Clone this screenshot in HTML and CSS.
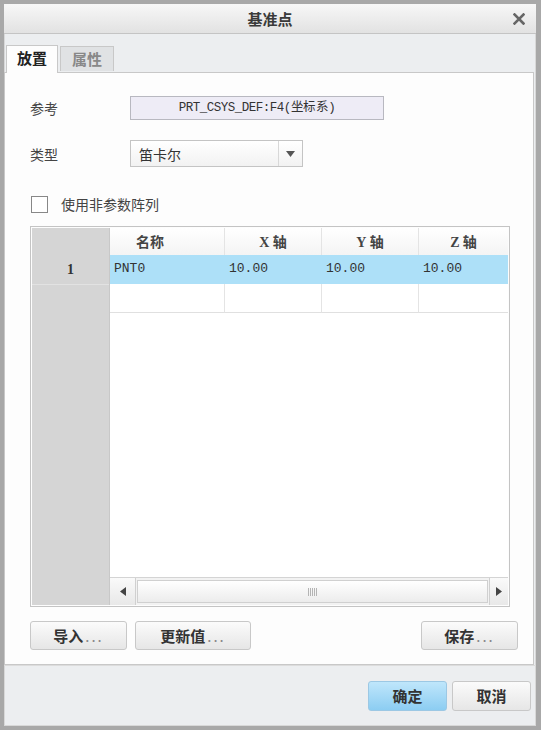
FILE: index.html
```html
<!DOCTYPE html>
<html lang="zh-CN">
<head>
    <meta charset="UTF-8">
    <meta name="viewport" content="width=device-width, initial-scale=1.0">
    <title>基准点</title>
    <link rel="stylesheet" href="styles.css">
</head>
<body>
    <div class="dialog">
        <div class="titlebar">
            <span class="title">基准点</span>
            <span class="close"><svg width="12" height="12" viewBox="0 0 12 12"><path d="M1.5 1.5L10.5 10.5M10.5 1.5L1.5 10.5" stroke="#666" stroke-width="2.6" stroke-linecap="square"/></svg></span>
        </div>
        <div class="tabs">
            <div class="tab active">放置</div>
            <div class="tab">属性</div>
        </div>
        <div class="panel">
            <div class="form">
                <div class="label">参考</div>
                <div class="ref-field">PRT_CSYS_DEF:F4(坐标系)</div>
                <div class="label">类型</div>
                <div class="select">
                    <span class="select-text">笛卡尔</span>
                    <span class="select-arrow"><svg width="9" height="6" viewBox="0 0 9 6"><path d="M0 0H9L4.5 6Z" fill="#555"/></svg></span>
                </div>
            </div>
            <label class="check-row">
                <span class="checkbox"></span>
                <span>使用非参数阵列</span>
            </label>
            <div class="grid">
                <div class="row-heads">
                    <div class="rh-top"></div>
                    <div class="rh-cell">1</div>
                </div>
                <div class="grid-main">
                    <div class="grid-row head">
                        <div class="cell c1">名称</div>
                        <div class="cell c2"><span class="axis">X</span> 轴</div>
                        <div class="cell c3"><span class="axis">Y</span> 轴</div>
                        <div class="cell c4"><span class="axis">Z</span> 轴</div>
                    </div>
                    <div class="grid-row selected">
                        <div class="cell c1">PNT0</div>
                        <div class="cell c2">10.00</div>
                        <div class="cell c3">10.00</div>
                        <div class="cell c4">10.00</div>
                    </div>
                    <div class="grid-row empty">
                        <div class="cell c1"></div>
                        <div class="cell c2"></div>
                        <div class="cell c3"></div>
                        <div class="cell c4"></div>
                    </div>
                    <div class="grid-fill"></div>
                    <div class="hscroll">
                        <div class="sb-btn left"><svg width="6" height="9" viewBox="0 0 6 9"><path d="M6 0V9L0 4.5Z" fill="#444"/></svg></div>
                        <div class="sb-track"><span class="grip"></span></div>
                        <div class="sb-btn right"><svg width="6" height="9" viewBox="0 0 6 9"><path d="M0 0V9L6 4.5Z" fill="#444"/></svg></div>
                    </div>
                </div>
            </div>
            <div class="actions">
                <button class="btn w97">导入<span class="dots">...</span></button>
                <button class="btn w116">更新值<span class="dots">...</span></button>
                <span class="spacer"></span>
                <button class="btn w97">保存<span class="dots">...</span></button>
            </div>
        </div>
        <div class="footer">
            <button class="btn primary">确定</button>
            <button class="btn">取消</button>
        </div>
    </div>
</body>
</html>
```

FILE: styles.css
```css
body {
    margin: 0;
    background: #9a9a9a;
    font-family: "Noto Sans CJK SC", "Noto Sans", sans-serif;
    font-size: 14px;
    color: #333;
}
.dialog {
    width: 541px;
    height: 730px;
    box-sizing: border-box;
    border: 4px solid #a8a8a8;
    border-right-width: 5px;
    background: #eceef0;
    display: flex;
    flex-direction: column;
    box-shadow: inset 0 0 0 1px #d8d8d8;
}
.titlebar {
    height: 29px;
    flex: none;
    display: flex;
    align-items: center;
    justify-content: center;
    position: relative;
    background: linear-gradient(#f7f7f7, #e2e2e2);
    border-bottom: 1px solid #c4c4c4;
}
.title {
    font-weight: bold;
    font-size: 15px;
    color: #3a3a3a;
}
.close {
    position: absolute;
    right: 11px;
    top: 9px;
    display: flex;
}
.tabs {
    height: 38px;
    flex: none;
    display: flex;
    align-items: flex-end;
    padding-left: 2px;
    gap: 2px;
}
.tab {
    height: 25px;
    width: 54px;
    box-sizing: border-box;
    border: 1px solid #c8c8c8;
    border-bottom: none;
    background: #e0e2e4;
    color: #888;
    font-weight: bold;
    font-size: 15px;
    line-height: 24px;
    text-align: center;
    margin-bottom: 1px;
}
.tab.active {
    height: 28px;
    width: 52px;
    background: #fdfdfd;
    color: #222;
    margin-bottom: -1px;
    position: relative;
    z-index: 1;
}
.panel {
    flex: 1;
    background: #fdfdfd;
    border: 1px solid #c8c8c8;
    margin-right: 2px;
    padding: 23px 0 13px 25px;
    display: flex;
    flex-direction: column;
}
.form {
    display: grid;
    grid-template-columns: 100px 254px;
    row-gap: 20px;
    align-items: center;
}
.label {
    color: #444;
    font-size: 14px;
}
.ref-field {
    height: 24px;
    box-sizing: border-box;
    border: 1px solid #b8b8c0;
    background: #eeecf6;
    font-family: "Liberation Mono", monospace;
    font-size: 12.5px;
    letter-spacing: -0.5px;
    text-align: center;
    line-height: 22px;
    color: #333;
}
.select {
    width: 173px;
    height: 27px;
    box-sizing: border-box;
    border: 1px solid #c4c4c4;
    background: linear-gradient(#ffffff, #f2f2f2);
    display: flex;
    align-items: center;
}
.select-text {
    flex: 1;
    padding-left: 8px;
    font-size: 14px;
    color: #333;
}
.select-arrow {
    width: 23px;
    height: 100%;
    border-left: 1px solid #d8d8d8;
    display: flex;
    align-items: center;
    justify-content: center;
}
.check-row {
    display: flex;
    align-items: center;
    gap: 13px;
    margin-top: 28px;
    margin-left: 1px;
    height: 18px;
    font-size: 14px;
    color: #444;
}
.checkbox {
    width: 15px;
    height: 15px;
    border: 1px solid #888;
    background: #fff;
}
.grid {
    margin-top: 13px;
    width: 480px;
    height: 381px;
    box-sizing: border-box;
    border: 1px solid #c4c4c4;
    padding: 1px;
    display: flex;
}
.row-heads {
    width: 78px;
    background: #d5d5d5;
    border-right: 1px solid #c8c8c8;
    display: flex;
    flex-direction: column;
}
.rh-top {
    height: 27px;
}
.rh-cell {
    height: 29px;
    line-height: 29px;
    text-align: center;
    font-family: "Liberation Serif", serif;
    font-weight: bold;
    font-size: 14px;
    color: #333;
    border-bottom: 1px solid #e2e2e2;
}
.grid-main {
    flex: 1;
    display: flex;
    flex-direction: column;
    background: #fff;
}
.grid-row {
    display: flex;
    height: 29px;
}
.grid-row.head {
    height: 27px;
    background: linear-gradient(#ffffff, #f4f4f4);
}
.cell {
    box-sizing: border-box;
    border-right: 1px solid #e4e4e4;
    padding-left: 4px;
    line-height: 28px;
    white-space: nowrap;
}
.c1 { width: 115px; }
.c2 { width: 97px; }
.c3 { width: 97px; }
.c4 { width: 89px; border-right: none; }
.head .cell {
    text-align: center;
    font-weight: bold;
    font-size: 14px;
    color: #444;
    padding-left: 0;
    line-height: 26px;
}
.head .c1 {
    text-align: left;
    padding-left: 26px;
}
.axis {
    font-family: "Liberation Serif", serif;
    font-weight: bold;
}
.selected {
    background: #ade0f8;
}
.selected .cell {
    border-right-color: #ade0f8;
    font-family: "Liberation Mono", monospace;
    font-size: 13px;
    color: #333;
}
.empty .cell {
    border-bottom: 1px solid #e0e0e0;
}
.grid-fill {
    flex: 1;
}
.hscroll {
    height: 27px;
    display: flex;
    border-top: 1px solid #d4d4d4;
    background: #f2f2f2;
}
.sb-btn {
    display: flex;
    align-items: center;
    justify-content: center;
    background: linear-gradient(#fafafa, #e8e8e8);
}
.sb-btn.left {
    width: 25px;
    border-right: 1px solid #d0d0d0;
}
.sb-btn.right {
    width: 18px;
    border-left: 1px solid #d0d0d0;
}
.sb-track {
    flex: 1;
    margin: 2px 1px;
    border: 1px solid #d0d0d0;
    background: linear-gradient(#ffffff, #ececec);
    display: flex;
    align-items: center;
    justify-content: center;
}
.grip {
    width: 9px;
    height: 8px;
    background: repeating-linear-gradient(90deg, #b4b4b4 0 1px, transparent 1px 2px);
}
.actions {
    display: flex;
    gap: 8px;
    margin-top: 14px;
    width: 488px;
}
.spacer {
    flex: 1;
}
.btn {
    height: 29px;
    box-sizing: border-box;
    border: 1px solid #c8c8c8;
    border-radius: 3px;
    background: linear-gradient(#fbfbfb, #e6e6e6);
    font-family: "Noto Sans CJK SC", sans-serif;
    font-weight: bold;
    font-size: 15px;
    color: #333;
    padding: 0;
    line-height: 26px;
}
.dots {
    font-weight: normal;
    color: #888;
    letter-spacing: 2px;
    margin-left: 2px;
}
.w97 { width: 97px; }
.w116 { width: 116px; }
.footer {
    height: 60px;
    flex: none;
    display: flex;
    justify-content: flex-end;
    align-items: center;
    gap: 5px;
    padding-right: 5px;
    border-top: 1px solid #dcdcdc;
}
.footer .btn {
    width: 79px;
    height: 30px;
}
.footer .btn.primary {
    background: linear-gradient(#bfe6fb, #8ccdf2);
    border-color: #9cc8e4;
}
```
